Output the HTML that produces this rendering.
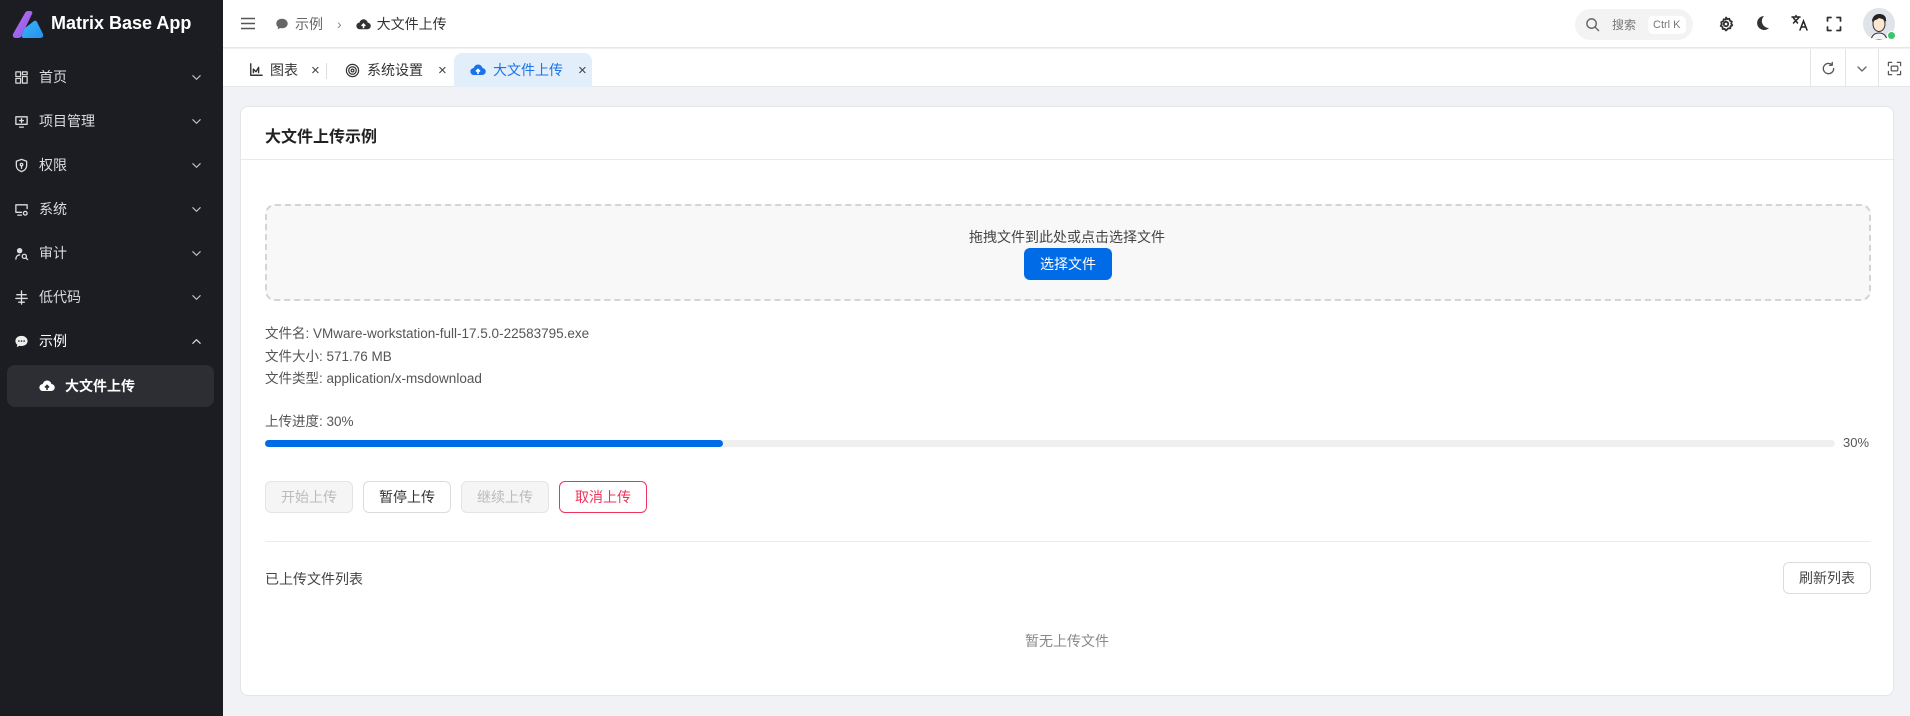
<!DOCTYPE html>
<html><head><meta charset="utf-8"><style>
*{box-sizing:border-box;margin:0;padding:0}
body{width:1910px;height:716px;overflow:hidden;font-family:"Liberation Sans","Noto Sans CJK SC",sans-serif;background:#f1f2f6;position:relative;color:#333;font-size:14px}
.abs{position:absolute}
.side{left:0;top:0;width:223px;height:716px;background:#1c1d22;color:#e6e6e8}
.logo{left:12px;top:10px;width:32px;height:30px}
.brand{left:51px;top:13px;font-size:18px;font-weight:bold;color:#fff}
.item{left:14px;font-size:14px;display:flex;align-items:center;gap:10px;width:190px;height:20px;color:#dcdce0}
.item svg{width:15px;height:15px}
.item svg.chev{position:absolute;right:2px;top:5px;width:11px;height:11px}
.sub{left:7px;top:365px;width:207px;height:42px;background:#2d2e33;border-radius:8px;color:#fff;font-weight:bold;display:flex;align-items:center;padding-left:32px;gap:10px}
.header{left:223px;top:0;width:1687px;height:48px;background:#fff;border-bottom:1px solid #e6e6e6}
.tabs{left:223px;top:49px;width:1687px;height:38px;background:#fff;border-bottom:1px solid #e6e6e6}
.tab{top:4px;height:34px;display:flex;align-items:center;gap:7px;font-size:14px;color:#333}
.x{font-size:15px;color:#444}
.card{left:240px;top:106px;width:1654px;height:590px;background:#fff;border:1px solid #e4e5e8;border-radius:8px}
.btn{height:32px;border:1px solid #dcdcdf;border-radius:6px;display:flex;align-items:center;justify-content:center;font-size:14px;background:#fff}
.ic{stroke:#333;fill:none;stroke-width:1.8;stroke-linecap:round;stroke-linejoin:round}
</style></head><body>
<div class="abs side">
 <svg class="abs logo" viewBox="0 0 32 30"><defs><linearGradient id="g1" x1="0" y1="0" x2="1" y2="1"><stop offset="0" stop-color="#c86ee8"/><stop offset="1" stop-color="#7a5cf0"/></linearGradient><linearGradient id="g2" x1="0" y1="0" x2="1" y2="1"><stop offset="0" stop-color="#35b8f5"/><stop offset="1" stop-color="#2a8ef0"/></linearGradient></defs><path d="M13 3 Q14 1 16 1 L19 1 Q21 2 20 4 L9 27 Q8 28 6 28 L3 28 Q0 27 1 24Z" fill="url(#g1)"/><path d="M13 18 L22 11 Q24 10 25 12 L31 24 Q32 28 28 28 L12 28 Q9 28 10 25 Z" fill="url(#g2)"/></svg>
 <div class="abs brand">Matrix Base App</div>
 <div class="abs item" style="top:67px"><svg viewBox="0 0 16 16" class="ic" style="stroke:#ddd;stroke-width:1.3"><rect x="2" y="2" width="5" height="5"/><rect x="9" y="2" width="5" height="3"/><rect x="2" y="9" width="5" height="5"/><rect x="9" y="7" width="5" height="7"/></svg>首页<svg class="chev ic" style="stroke:#bbb;stroke-width:1.3" viewBox="0 0 12 12"><path d="M2 4l4 4 4-4"/></svg></div>
 <div class="abs item" style="top:111px"><svg viewBox="0 0 16 16" class="ic" style="stroke:#ddd;stroke-width:1.4"><rect x="2" y="3" width="12" height="8"/><path d="M6 14h4M8 5v4M6 7h4"/></svg>项目管理<svg class="chev ic" style="stroke:#bbb;stroke-width:1.3" viewBox="0 0 12 12"><path d="M2 4l4 4 4-4"/></svg></div>
 <div class="abs item" style="top:155px"><svg viewBox="0 0 16 16" class="ic" style="stroke:#ddd;stroke-width:1.4"><path d="M8 1.5l5.5 2v4.5c0 3.5-2.5 5.5-5.5 6.5-3-1-5.5-3-5.5-6.5V3.5z"/><circle cx="8" cy="7" r="1.3"/><path d="M8 8.5v2.5"/></svg>权限<svg class="chev ic" style="stroke:#bbb;stroke-width:1.3" viewBox="0 0 12 12"><path d="M2 4l4 4 4-4"/></svg></div>
 <div class="abs item" style="top:199px"><svg viewBox="0 0 16 16" class="ic" style="stroke:#ddd;stroke-width:1.4"><path d="M8 11H2V3h12v4M4 14h4"/><circle cx="12" cy="12" r="2"/></svg>系统<svg class="chev ic" style="stroke:#bbb;stroke-width:1.3" viewBox="0 0 12 12"><path d="M2 4l4 4 4-4"/></svg></div>
 <div class="abs item" style="top:243px"><svg viewBox="0 0 16 16" class="ic" style="stroke:#ddd;stroke-width:1.4"><circle cx="6" cy="5" r="2.2" fill="#ddd"/><path d="M2 14c0-3 2-4.5 4-4.5"/><circle cx="11" cy="11" r="2.2"/><path d="M12.8 12.8l1.7 1.7"/></svg>审计<svg class="chev ic" style="stroke:#bbb;stroke-width:1.3" viewBox="0 0 12 12"><path d="M2 4l4 4 4-4"/></svg></div>
 <div class="abs item" style="top:287px"><svg viewBox="0 0 16 16" class="ic" style="stroke:#ddd;stroke-width:1.4"><path d="M8 1v14M3 5h10M2 9h12M5 13h6"/></svg>低代码<svg class="chev ic" style="stroke:#bbb;stroke-width:1.3" viewBox="0 0 12 12"><path d="M2 4l4 4 4-4"/></svg></div>
 <div class="abs item" style="top:331px;color:#fff"><svg viewBox="0 0 16 16"><path d="M8 2C4 2 1.5 4.5 1.5 7.5c0 1.6.8 3 2 4L3 14l3-1.5c.6.2 1.3.3 2 .3 4 0 6.5-2.5 6.5-5.3S12 2 8 2z" fill="#eee"/><circle cx="5.2" cy="7.5" r=".9" fill="#1c1d22"/><circle cx="8" cy="7.5" r=".9" fill="#1c1d22"/><circle cx="10.8" cy="7.5" r=".9" fill="#1c1d22"/></svg>示例<svg class="chev ic" style="stroke:#ddd;stroke-width:1.3" viewBox="0 0 12 12"><path d="M2 8l4-4 4 4"/></svg></div>
 <div class="abs sub"><svg width="16" height="16" viewBox="0 0 16 16"><path d="M4 13a3.5 3.5 0 0 1-.3-7A4.5 4.5 0 0 1 12.5 6 3.5 3.5 0 0 1 12 13z" fill="#fff"/><path d="M8 12V7.5M6 9.5l2-2 2 2" stroke="#2d2e33" stroke-width="1.6" fill="none"/></svg>大文件上传</div>
</div>

<div class="abs header">
 <svg class="abs" style="left:18px;top:17px" width="14" height="13" viewBox="0 0 14 13"><path d="M0 1.5h14M0 6.5h14M0 11.5h14" stroke="#555" stroke-width="1.5"/></svg>
 <div class="abs" style="left:52px;top:14px;display:flex;align-items:center;gap:6px;color:#666;font-size:14px">
  <svg width="14" height="14" viewBox="0 0 16 16"><path d="M8 2C4 2 1.5 4.5 1.5 7.5c0 1.6.8 3 2 4L3 14l3-1.5c.6.2 1.3.3 2 .3 4 0 6.5-2.5 6.5-5.3S12 2 8 2z" fill="#666"/></svg>示例<span style="margin:0 8px;color:#888">›</span>
  <svg width="15" height="15" viewBox="0 0 16 16"><path d="M4 13a3.5 3.5 0 0 1-.3-7A4.5 4.5 0 0 1 12.5 6 3.5 3.5 0 0 1 12 13z" fill="#333"/><path d="M8 12V7.5M6 9.5l2-2 2 2" stroke="#fff" stroke-width="1.6" fill="none"/></svg><span style="color:#333">大文件上传</span>
 </div>
 <div class="abs" style="left:1352px;top:9px;width:118px;height:31px;border-radius:16px;background:#f3f3f4;display:flex;align-items:center;padding-left:10px;font-size:12px;color:#777">
  <svg width="15" height="15" viewBox="0 0 16 16" class="ic" style="stroke:#666;stroke-width:1.5"><circle cx="7" cy="7" r="5"/><path d="M11 11l3.5 3.5"/></svg><span style="margin-left:12px">搜索</span><span style="margin-left:12px;background:#fff;border-radius:5px;padding:3px 5px;font-size:11px">Ctrl K</span></div>
 <svg class="abs ic" style="left:1495px;top:16px" width="16" height="16" viewBox="0 0 16 16"><circle cx="8" cy="8" r="2.2"/><path d="M8 1.5l1.3 1.6 2-.4.6 2 1.9.9-.6 2 1.1 1.7-1.8 1-.2 2.1-2-.1L8 14.5l-1.3-1.6-2 .1-.2-2.1-1.8-1 1.1-1.7-.6-2 1.9-.9.6-2 2 .4z"/></svg>
 <svg class="abs" style="left:1530px;top:14px" width="18" height="18" viewBox="0 0 18 18"><path d="M11 2a7 7 0 1 0 5 12A7 7 0 0 1 11 2z" fill="#333"/></svg>
 <svg class="abs" style="left:1568px;top:14px" width="18" height="18" viewBox="0 0 18 18" fill="none" stroke="#222" stroke-width="1.5" stroke-linecap="round"><path d="M1 3h8M5 1.5v1.5M2.5 4l4 5M7.5 4l-5 5M9 16l3.5-9 3.5 9M10.2 13h4.6"/></svg>
 <svg class="abs ic" style="left:1603px;top:16px" width="16" height="16" viewBox="0 0 16 16"><path d="M1.5 5V1.5H5M11 1.5h3.5V5M14.5 11v3.5H11M5 14.5H1.5V11"/></svg>
 <div class="abs" style="left:1640px;top:8px;width:32px;height:32px;border-radius:50%;background:#dfe3ea;overflow:hidden">
  <svg width="32" height="32" viewBox="0 0 32 32"><path d="M8 32c1-5 4-7 8-7s7 2 8 7z" fill="#f4f4f4" stroke="#333" stroke-width="1"/><ellipse cx="16" cy="16" rx="6" ry="7.5" fill="#fde6cf" stroke="#333" stroke-width="1"/><path d="M9 14c0-6 4-8 7-8s8 1 7 8c-2-3-4-3-7-4-2 2-5 2-7 4z" fill="#222"/></svg></div>
 <div class="abs" style="left:1664px;top:31px;width:9px;height:9px;border-radius:50%;background:#3ec46d;border:1px solid #fff"></div>
</div>

<div class="abs tabs">
 <div class="abs tab" style="left:26px"><svg width="14" height="14" viewBox="0 0 16 16" class="ic" style="stroke-width:1.6"><path d="M2 1v13h13M5 11V7l3 3 3-5v6"/></svg>图表<span class="x" style="margin-left:6px">×</span></div>
 <div class="abs" style="left:103px;top:14px;width:1px;height:16px;background:#ddd"></div>
 <div class="abs tab" style="left:122px"><svg width="15" height="15" viewBox="0 0 16 16" class="ic" style="stroke-width:1.3"><circle cx="8" cy="8" r="6.5"/><circle cx="8" cy="8" r="4"/><circle cx="8" cy="8" r="1.5"/></svg>系统设置<span class="x" style="margin-left:8px">×</span></div>
 <div class="abs tab" style="left:231px;width:138px;background:#e3eefb;border-radius:8px 8px 0 0;color:#1a73e8;padding-left:16px"><svg width="16" height="16" viewBox="0 0 16 16"><path d="M4 13a3.5 3.5 0 0 1-.3-7A4.5 4.5 0 0 1 12.5 6 3.5 3.5 0 0 1 12 13z" fill="#1a73e8"/><path d="M8 12V7.5M6 9.5l2-2 2 2" stroke="#fff" stroke-width="1.6" fill="none"/></svg>大文件上传<span class="x" style="margin-left:8px">×</span></div>
 <div class="abs" style="left:1587px;top:0;width:1px;height:38px;background:#e3e3e3"></div>
 <div class="abs" style="left:1622px;top:0;width:1px;height:38px;background:#e3e3e3"></div>
 <div class="abs" style="left:1655px;top:0;width:1px;height:38px;background:#e3e3e3"></div>
 <svg class="abs ic" style="left:1598px;top:12px;stroke:#555;stroke-width:1.4" width="15" height="15" viewBox="0 0 16 16"><path d="M13.5 8A5.5 5.5 0 1 1 11.5 3.8M12 1.5v3h-3"/></svg>
 <svg class="abs ic" style="left:1633px;top:14px;stroke:#666;stroke-width:1.3" width="12" height="12" viewBox="0 0 12 12"><path d="M2 4l4 4 4-4"/></svg>
 <svg class="abs ic" style="left:1664px;top:12px;stroke:#555;stroke-width:1.3" width="15" height="15" viewBox="0 0 16 16"><path d="M1.5 5V1.5H5M11 1.5h3.5V5M14.5 11v3.5H11M5 14.5H1.5V11"/><rect x="4.5" y="5.5" width="7" height="5" rx="1"/></svg>
</div>

<div class="abs card">
 <div class="abs" style="left:24px;top:16px;font-size:16px;font-weight:bold;color:#222">大文件上传示例</div>
 <div class="abs" style="left:0;top:52px;width:1652px;height:1px;background:#eaeaea"></div>
 <div class="abs" style="left:24px;top:97px;width:1606px;height:97px;border:2px dashed #d4d4d6;border-radius:10px;background:#f8f8f9"></div>
 <div class="abs" style="left:0;width:1652px;top:120px;text-align:center;font-size:14px;color:#444">拖拽文件到此处或点击选择文件</div>
 <div class="abs" style="left:783px;top:141px;width:88px;height:32px;background:#006be6;border-radius:6px;color:#fff;font-size:14px;display:flex;align-items:center;justify-content:center">选择文件</div>
 <div class="abs" style="left:24px;top:216px;line-height:22.5px;font-size:13.5px;color:#555">文件名: VMware-workstation-full-17.5.0-22583795.exe<br>文件大小: 571.76 MB<br>文件类型: application/x-msdownload</div>
 <div class="abs" style="left:24px;top:303px;font-size:13.5px;color:#555">上传进度: 30%</div>
 <div class="abs" style="left:24px;top:333px;width:1570px;height:7px;background:#efefef;border-radius:4px"><div style="width:458px;height:7px;background:#006be6;border-radius:4px"></div></div>
 <div class="abs" style="left:1602px;top:328px;font-size:13px;color:#555">30%</div>
 <div class="abs btn" style="left:24px;top:374px;width:88px;background:#f5f5f6;color:#bbb;border-color:#e4e4e4">开始上传</div>
 <div class="abs btn" style="left:122px;top:374px;width:88px;color:#333">暂停上传</div>
 <div class="abs btn" style="left:220px;top:374px;width:88px;background:#f5f5f6;color:#bbb;border-color:#e4e4e4">继续上传</div>
 <div class="abs btn" style="left:318px;top:374px;width:88px;color:#f0325a;border-color:#f0325a">取消上传</div>
 <div class="abs" style="left:24px;top:434px;width:1606px;height:1px;background:#ebebeb"></div>
 <div class="abs" style="left:24px;top:462px;font-size:14px;color:#444">已上传文件列表</div>
 <div class="abs btn" style="left:1542px;top:455px;width:88px;color:#444">刷新列表</div>
 <div class="abs" style="left:0;width:1652px;top:524px;text-align:center;font-size:14px;color:#888">暂无上传文件</div>
</div>
</body></html>
